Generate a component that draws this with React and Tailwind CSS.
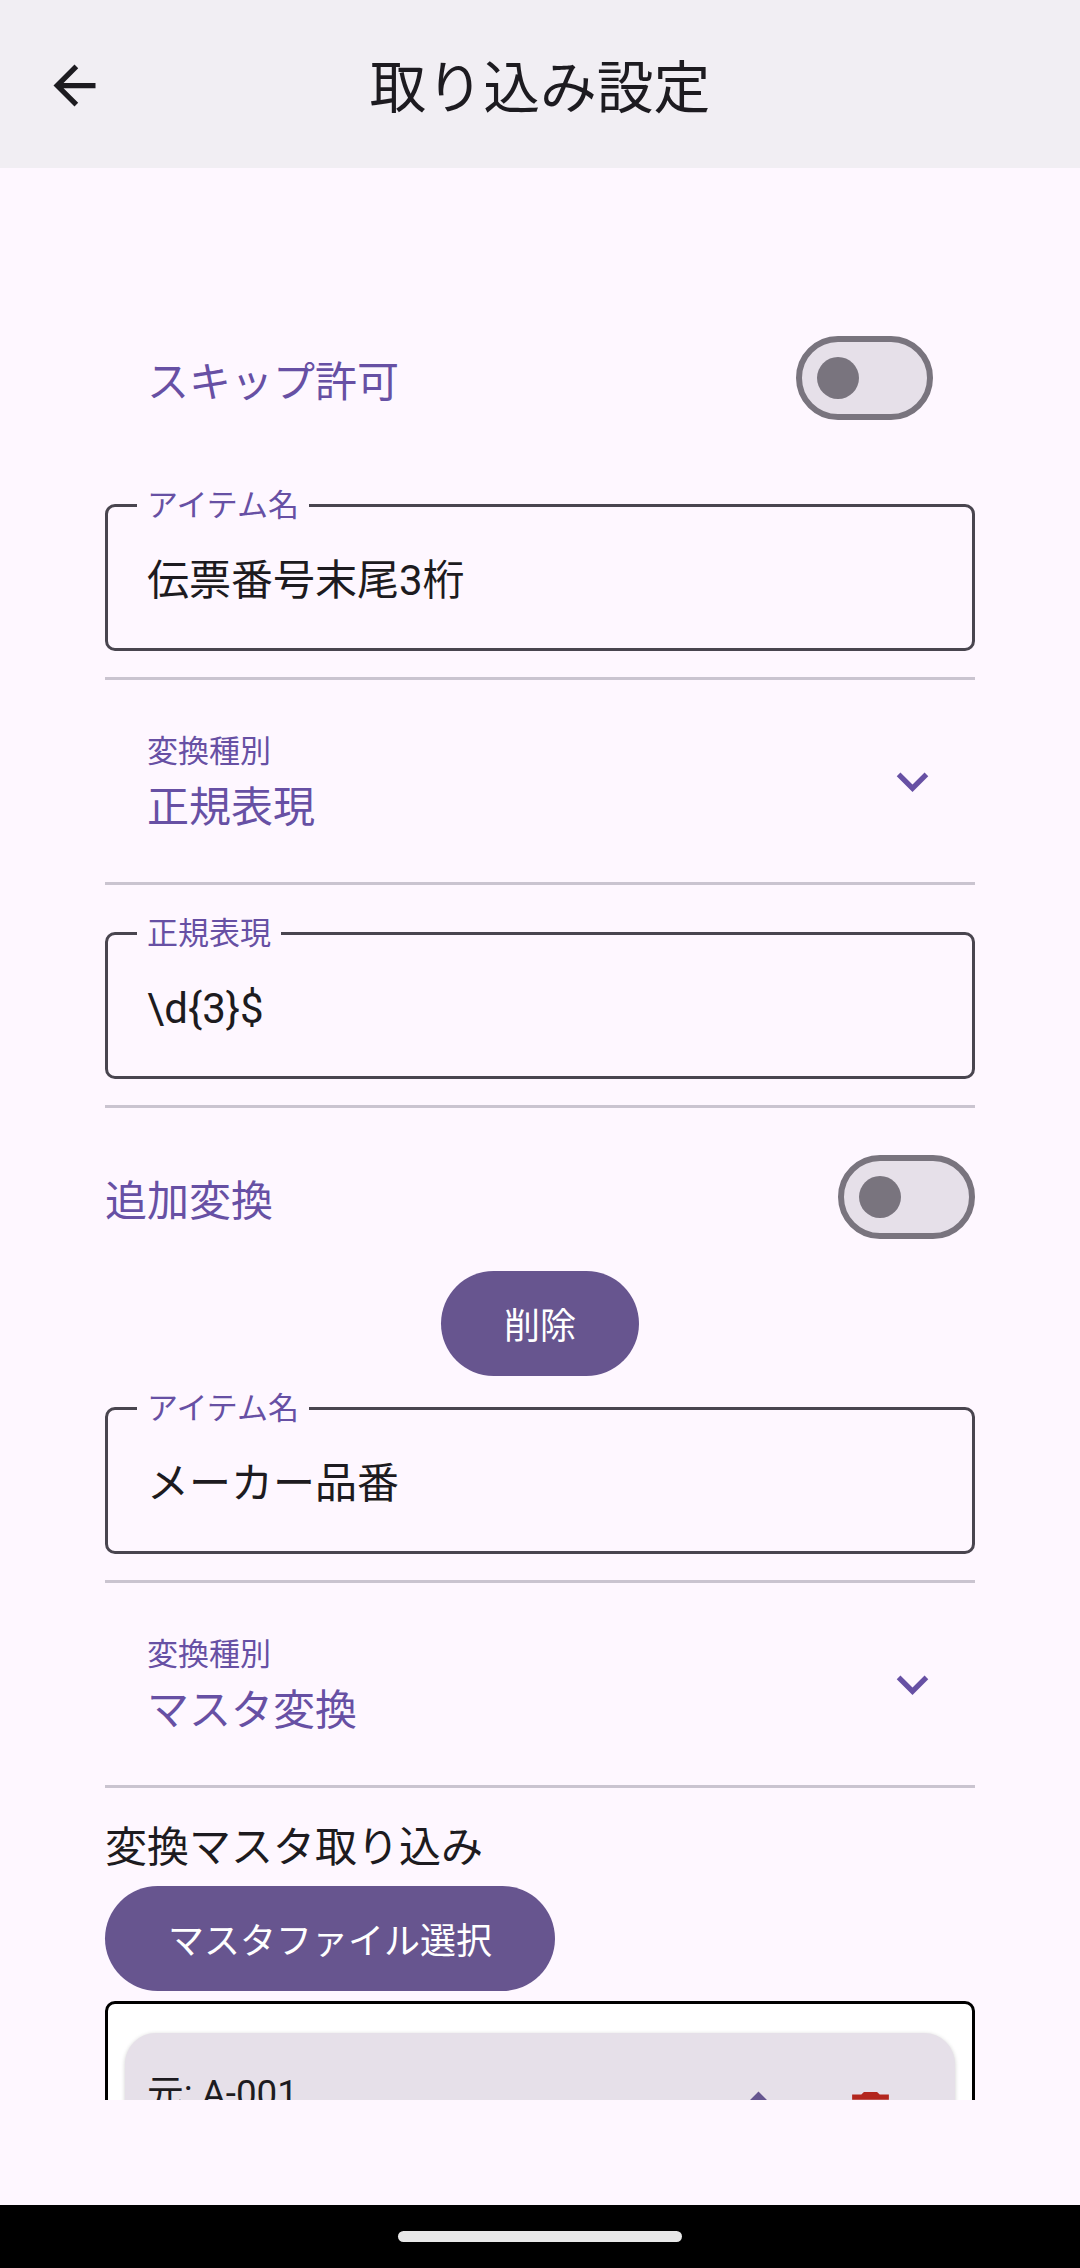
import { useState } from 'react';

const BackIcon = () => (
  <svg viewBox="0 0 24 24" className="w-[63px] h-[63px] fill-[#1d1b20]">
    <path d="M20 11H7.83l5.59-5.59L12 4l-8 8 8 8 1.41-1.41L7.83 13H20v-2z" />
  </svg>
);

const ExpandIcon = () => (
  <svg viewBox="0 0 24 24" className="w-[63px] h-[63px] fill-[#6750a4]">
    <path d="M16.59 8.59L12 13.17 7.41 8.59 6 10l6 6 6-6z" />
  </svg>
);

const UpIcon = () => (
  <svg viewBox="0 0 24 24" className="w-[63px] h-[63px] -mt-[3px] fill-[#65558f]">
    <path d="M4 12l1.41 1.41L11 7.83V20h2V7.83l5.58 5.59L20 12l-8-8-8 8z" />
  </svg>
);

const DeleteIcon = () => (
  <svg viewBox="0 0 24 24" className="w-[63px] h-[63px] fill-[#b3261e]">
    <path d="M6 19c0 1.1.9 2 2 2h8c1.1 0 2-.9 2-2V7H6v12zM19 4h-3.5l-1-1h-5l-1 1H5v2h14V4z" />
  </svg>
);

const Toggle = () => (
  <div className="w-[137px] h-[84px] shrink-0 rounded-full border-[6px] border-[#79747e] bg-[#e6e0e9] flex items-center pl-[15px]">
    <div className="w-[42px] h-[42px] rounded-full bg-[#79747e]" />
  </div>
);

const Divider = ({ className }) => <div className={`h-[3px] bg-[#cac4d0] ${className}`} />;

const OutlinedField = ({ label, value, className }) => (
  <div className={`relative h-[147px] rounded-[10px] border-[3px] border-[#49454f] flex items-center pl-[39px] ${className}`}>
    <span className="absolute left-[29px] -top-[15px] px-[10px] bg-[#fef7ff] text-[31px] leading-[28px] text-[#6750a4]">
      {label}
    </span>
    <span className="text-[42px] leading-[56px] text-[#1d1b20] mt-[7px]">{value}</span>
  </div>
);

const SelectRow = ({ label, value }) => (
  <div className="h-[202px] flex items-center justify-between pl-[42px] pr-[31px]">
    <div className="flex flex-col mt-[5px]">
      <span className="text-[31px] leading-[40px] text-[#6750a4]">{label}</span>
      <span className="text-[42px] leading-[56px] text-[#6750a4] mt-[8px]">{value}</span>
    </div>
    <div>
      <ExpandIcon />
    </div>
  </div>
);

const PillButton = ({ children, className }) => (
  <button className={`h-[105px] rounded-full bg-[#67558f] pt-[7px] text-[36px] leading-[48px] text-white ${className}`}>
    {children}
  </button>
);

export default function App() {
  const [items] = useState([{ from: 'A-001' }]);

  return (
    <div className="w-[1080px] h-[2268px] flex flex-col bg-[#fef7ff] font-[Roboto,'Noto_Sans_CJK_JP',sans-serif]">
      {/* Top bar */}
      <header className="relative h-[168px] shrink-0 bg-[#f1eef3] flex items-center justify-center">
        <div className="absolute left-[43px] top-[54px]">
          <BackIcon />
        </div>
        <h1 className="mt-[10px] text-[56.8px] leading-[72px] text-[#1d1b20] font-normal">取り込み設定</h1>
      </header>

      {/* Scroll area */}
      <main className="h-[1932px] shrink-0 overflow-hidden px-[105px] pt-[168px]">
        <div className="h-[83px] flex items-center justify-between pl-[42px] pr-[42px]">
          <span className="text-[42px] leading-[56px] text-[#6750a4] mt-[11px]">スキップ許可</span>
          <Toggle />
        </div>

        <OutlinedField label="アイテム名" value="伝票番号末尾3桁" className="mt-[85px]" />
        <Divider className="mt-[26px]" />
        <SelectRow label="変換種別" value="正規表現" />
        <Divider />
        <OutlinedField label="正規表現" value="\d{3}$" className="mt-[47px]" />
        <Divider className="mt-[26px]" />

        <div className="mt-[47px] h-[84px] flex items-center justify-between">
          <span className="text-[42px] leading-[56px] text-[#6750a4] mt-[9px]">追加変換</span>
          <Toggle />
        </div>

        <div className="mt-[32px] flex justify-center">
          <PillButton className="w-[198px]">削除</PillButton>
        </div>

        <OutlinedField label="アイテム名" value="メーカー品番" className="mt-[31px]" />
        <Divider className="mt-[26px]" />
        <SelectRow label="変換種別" value="マスタ変換" />
        <Divider />

        <p className="mt-[32px] text-[42px] leading-[56px] text-[#1d1b20]">変換マスタ取り込み</p>
        <PillButton className="w-[450px] mt-[10px] block">マスタファイル選択</PillButton>

        <div className="mt-[10px] rounded-[10px] border-[3px] border-black bg-white px-[17px] pt-[29px]">
          {items.map((item) => (
            <div
              key={item.from}
              className="h-[220px] rounded-[31px] bg-[#e6e0e9] shadow-[0_1px_4px_rgba(0,0,0,0.2)] flex items-start justify-between pl-[22px] pr-[53px] pt-[37px]"
            >
              <span className="text-[36.75px] leading-[48px] text-[#1d1b20]">元: {item.from}</span>
              <div className="flex items-start gap-[49px] pt-[14px]">
                <UpIcon />
                <DeleteIcon />
              </div>
            </div>
          ))}
        </div>
      </main>

      <div className="h-[105px] shrink-0" />

      {/* Gesture bar */}
      <div className="h-[63px] shrink-0 bg-black flex items-center justify-center">
        <div className="w-[284px] h-[11px] rounded-full bg-[#e8e8e8]" />
      </div>
    </div>
  );
}
